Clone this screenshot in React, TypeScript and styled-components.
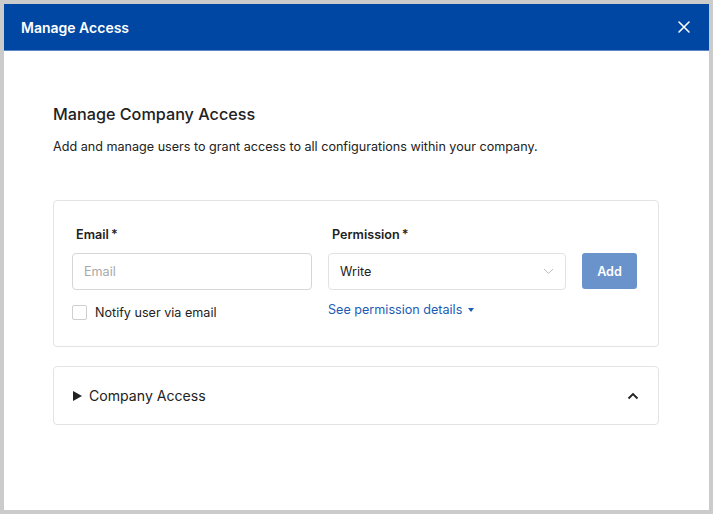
import React, { useState } from 'react';
import styled, { createGlobalStyle } from 'styled-components';

const GlobalStyle = createGlobalStyle`
  html, body {
    margin: 0;
    padding: 0;
    background: #cbcbcb;
    font-family: Inter, "Noto Sans", "Liberation Sans", sans-serif;
  }
`;

const Frame = styled.div`
  width: 713px;
  height: 514px;
  padding: 4px;
  box-sizing: border-box;
  background: #cbcbcb;
`;

const Dialog = styled.div`
  width: 705px;
  height: 506px;
  background: #fff;
  display: flex;
  flex-direction: column;
`;

const Header = styled.div`
  height: 46px;
  background: #0047a3;
  border-bottom: 1px solid #5b86c4;
  display: flex;
  align-items: center;
  justify-content: space-between;
  padding: 0 18px 0 17px;
`;

const HeaderTitle = styled.h1`
  margin: 0;
  color: #fff;
  font-size: 14px;
  font-weight: 600;
`;

const CloseButton = styled.button`
  background: transparent;
  border: none;
  padding: 0;
  width: 14px;
  height: 14px;
  cursor: pointer;
  display: flex;
`;

const Body = styled.div`
  padding: 53px 50px 0 49px;
`;

const Title = styled.h2`
  margin: 0;
  font-size: 16.2px;
  font-weight: 500;
  color: #222;
`;

const Description = styled.p`
  margin: 15px 0 0;
  font-size: 12.6px;
  color: #222;
`;

const Card = styled.div`
  border: 1px solid #e3e3e3;
  border-radius: 4px;
  background: #fff;
`;

const FormCard = styled(Card)`
  margin-top: 46px;
  padding: 26px 20px 26px 18px;
  display: grid;
  grid-template-columns: 240px 238px 55px;
  column-gap: 16px;
  align-items: start;
`;

const Field = styled.div`
  display: flex;
  flex-direction: column;
`;

const Label = styled.label`
  font-size: 12.6px;
  font-weight: 600;
  color: #222;
  padding-left: 4px;
  margin-bottom: 10px;
  height: 16px;
`;

const TextInput = styled.input`
  box-sizing: border-box;
  height: 37px;
  border: 1px solid #d6d6d6;
  border-radius: 4px;
  padding: 0 11px;
  font-family: inherit;
  font-size: 12.6px;
  outline: none;
  &::placeholder {
    color: #a8a8a8;
  }
`;

const SelectBox = styled.div`
  box-sizing: border-box;
  height: 37px;
  border: 1px solid #e2e2e2;
  border-radius: 4px;
  padding: 0 11px;
  display: flex;
  align-items: center;
  justify-content: space-between;
  font-size: 12.6px;
  color: #222;
`;

const AddButton = styled.button`
  margin-top: 26px;
  height: 36px;
  border: none;
  border-radius: 3px;
  background: #6a93cb;
  color: #fff;
  font-family: inherit;
  font-size: 12.6px;
  font-weight: 600;
`;

const CheckRow = styled.label`
  display: flex;
  align-items: center;
  gap: 8px;
  margin-top: 15px;
  font-size: 12.6px;
  color: #222;
`;

const CheckBox = styled.span`
  width: 13px;
  height: 13px;
  border: 1px solid #cfcfcf;
  border-radius: 2px;
`;

const DetailsLink = styled.a`
  margin-top: 12px;
  font-size: 12.6px;
  color: #1d5bb5;
  display: flex;
  align-items: center;
  gap: 6px;
  cursor: pointer;
`;

const AccessCard = styled(Card)`
  margin-top: 19px;
  height: 59px;
  box-sizing: border-box;
  padding: 0 19px;
  display: flex;
  align-items: center;
  justify-content: space-between;
`;

const AccessTitle = styled.div`
  display: flex;
  align-items: center;
  gap: 7px;
  font-size: 14.1px;
  color: #222;
`;

const App: React.FC = () => {
  const [email, setEmail] = useState('');

  return (
    <Frame>
      <GlobalStyle />
      <Dialog>
        <Header>
          <HeaderTitle>Manage Access</HeaderTitle>
          <CloseButton aria-label="close">
            <svg width="14" height="14" viewBox="0 0 14 14">
              <path d="M2 2L12 12M12 2L2 12" stroke="#fff" strokeWidth="1.6" strokeLinecap="round" />
            </svg>
          </CloseButton>
        </Header>
        <Body>
          <Title>Manage Company Access</Title>
          <Description>
            Add and manage users to grant access to all configurations within your company.
          </Description>
          <FormCard>
            <Field>
              <Label>Email{'\u2009'}*</Label>
              <TextInput
                placeholder="Email"
                value={email}
                onChange={(e) => setEmail(e.target.value)}
              />
              <CheckRow>
                <CheckBox />
                Notify user via email
              </CheckRow>
            </Field>
            <Field>
              <Label>Permission{'\u2009'}*</Label>
              <SelectBox>
                <span>Write</span>
                <svg width="11" height="7" viewBox="0 0 11 7">
                  <path d="M1 1L5.5 5.5L10 1" fill="none" stroke="#bdbdbd" strokeWidth="1" />
                </svg>
              </SelectBox>
              <DetailsLink>
                See permission details
                <svg width="6" height="4" viewBox="0 0 6 4">
                  <path d="M0 0H6L3 4Z" fill="#1d5bb5" />
                </svg>
              </DetailsLink>
            </Field>
            <AddButton>Add</AddButton>
          </FormCard>
          <AccessCard>
            <AccessTitle>
              <svg width="9" height="10" viewBox="0 0 9 10">
                <path d="M0 0L9 5L0 10Z" fill="#222" />
              </svg>
              Company Access
            </AccessTitle>
            <svg width="12" height="8" viewBox="0 0 12 8">
              <path d="M1.5 6.5L6 2L10.5 6.5" fill="none" stroke="#222" strokeWidth="1.8" />
            </svg>
          </AccessCard>
        </Body>
      </Dialog>
    </Frame>
  );
};

export default App;
